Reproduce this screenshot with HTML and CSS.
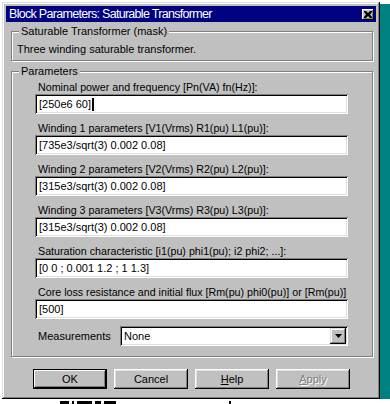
FILE: index.html
```html
<!DOCTYPE html>
<html lang="en">
<head>
    <meta charset="UTF-8">
    <meta name="viewport" content="width=device-width, initial-scale=1.0">
    <title>Block Parameters: Saturable Transformer</title>
    <link rel="stylesheet" href="styles.css">
</head>
<body>
    <div class="screen">
        <div class="window">
            <div class="titlebar">
                <span class="title">Block Parameters: Saturable Transformer</span>
                <span class="close-btn">
                    <svg width="8" height="7" viewBox="0 0 8 7"><path d="M0 0h2l2 2 2-2h2v1L6 3.5 8 6v1H6L4 5 2 7H0V6l2-2.5L0 1z" fill="#000"/></svg>
                </span>
            </div>

            <div class="content">
                <fieldset class="group">
                    <legend>Saturable Transformer (mask)</legend>
                    <p class="description">Three winding saturable transformer.</p>
                </fieldset>

                <fieldset class="group params">
                    <legend>Parameters</legend>
                    <div class="param-list">
                        <div class="param">
                            <div class="param-label">Nominal power and frequency [Pn(VA) fn(Hz)]:</div>
                            <div class="field">[250e6 60]<span class="caret"></span></div>
                        </div>
                        <div class="param">
                            <div class="param-label">Winding 1 parameters [V1(Vrms) R1(pu) L1(pu)]:</div>
                            <div class="field">[735e3/sqrt(3) 0.002 0.08]</div>
                        </div>
                        <div class="param">
                            <div class="param-label">Winding 2 parameters [V2(Vrms) R2(pu) L2(pu)]:</div>
                            <div class="field">[315e3/sqrt(3) 0.002 0.08]</div>
                        </div>
                        <div class="param">
                            <div class="param-label">Winding 3 parameters [V3(Vrms) R3(pu) L3(pu)]:</div>
                            <div class="field">[315e3/sqrt(3) 0.002 0.08]</div>
                        </div>
                        <div class="param">
                            <div class="param-label">Saturation characteristic [i1(pu) phi1(pu); i2 phi2; ...]:</div>
                            <div class="field">[0 0 ; 0.001 1.2 ; 1 1.3]</div>
                        </div>
                        <div class="param">
                            <div class="param-label">Core loss resistance and initial flux [Rm(pu) phi0(pu)] or [Rm(pu)]</div>
                            <div class="field">[500]</div>
                        </div>
                        <div class="select-row">
                            <span class="select-label">Measurements</span>
                            <div class="select">
                                <span class="select-value">None</span>
                                <span class="select-btn">
                                    <svg width="7" height="4" viewBox="0 0 7 4"><path d="M0 0h7L3.5 4z" fill="#000"/></svg>
                                </span>
                            </div>
                        </div>
                    </div>
                </fieldset>

                <div class="buttons">
                    <button class="btn default">OK</button>
                    <button class="btn">Cancel</button>
                    <button class="btn"><u>H</u>elp</button>
                    <button class="btn disabled"><u>A</u>pply</button>
                </div>
            </div>
        </div>
        <div class="desk"></div>
    </div>
    <!-- tops of the window behind the dialog -->
    <div class="behind">
        <span class="mark w4"></span>
        <span class="mark w2"></span>
        <span class="mark w6"></span>
        <span class="mark w3"></span>
        <span class="mark w5"></span>
        <span class="mark w2 far"></span>
    </div>
</body>
</html>
```

FILE: styles.css
```css
body {
    margin: 0;
    width: 390px;
    height: 404px;
    overflow: hidden;
    background: #fff;
    font-family: "Liberation Sans", Arial, sans-serif;
    font-size: 11px;
    color: #000;
}
.screen {
    display: flex;
    height: 399px;
}
.window {
    box-sizing: border-box;
    width: 378px;
    height: 397px;
    margin: 2px 0 0 2px;
    padding: 4px;
    background: #c0c0c0;
    box-shadow: inset -1px -1px #000, inset 1px 1px #dfdfdf, inset -2px -2px #808080, inset 2px 2px #fff;
}
.desk {
    flex: 1;
    margin-top: 4px;
    background: #008080;
}

/* title bar */
.titlebar {
    display: flex;
    align-items: center;
    height: 16px;
    padding: 0 2px 0 3px;
    background: #000080;
    color: #fff;
}
.title {
    flex: 1;
    font-size: 12.5px;
    letter-spacing: -0.7px;
    white-space: nowrap;
}
.close-btn {
    display: flex;
    align-items: center;
    justify-content: center;
    width: 12px;
    height: 11px;
    background: #c0c0c0;
    box-shadow: inset -1px -1px #000, inset 1px 1px #fff, inset -2px -2px #808080;
}

/* group boxes */
.content {
    padding: 3px 0 0 5px;
}
.group {
    box-sizing: border-box;
    width: 362px;
    margin: 0;
    padding: 0;
    border: 1px solid #808080;
    box-shadow: inset 1px 1px #fff, 1px 1px #fff;
}
.group legend {
    margin-left: 7px;
    padding: 0 2px;
    line-height: 13px;
    background: #c0c0c0;
}
.description {
    margin: 0;
    padding: 5px 5px 4px;
    line-height: 13px;
}
.params {
    margin-top: 4px;
}
.param-list {
    display: flex;
    flex-direction: column;
    gap: 8px;
    padding: 3px 24px 10px 23px;
}
.param-label {
    padding-left: 3px;
    line-height: 13px;
    font-size: 10.7px;
    white-space: nowrap;
}
.field {
    box-sizing: border-box;
    height: 20px;
    padding: 0 4px;
    line-height: 20px;
    background: #fff;
    white-space: nowrap;
    box-shadow: inset 1px 1px #808080, inset -1px -1px #fff, inset 2px 2px #000, inset -2px -2px #dfdfdf;
}
.caret {
    display: inline-block;
    width: 2px;
    height: 13px;
    margin-left: 1px;
    vertical-align: -3px;
    background: #000;
}

/* measurements dropdown */
.select-row {
    display: flex;
    align-items: center;
    margin-top: -1px;
}
.select-label {
    width: 82px;
    padding-left: 3px;
}
.select {
    flex: 1;
    display: flex;
    align-items: center;
    box-sizing: border-box;
    height: 20px;
    padding: 2px;
    background: #fff;
    box-shadow: inset 1px 1px #808080, inset -1px -1px #fff, inset 2px 2px #000, inset -2px -2px #dfdfdf;
}
.select-value {
    flex: 1;
    padding-left: 2px;
}
.select-btn {
    display: flex;
    align-items: center;
    justify-content: center;
    width: 16px;
    height: 16px;
    background: #c0c0c0;
    box-shadow: inset -1px -1px #000, inset 1px 1px #dfdfdf, inset -2px -2px #808080, inset 2px 2px #fff;
}

/* buttons */
.buttons {
    display: grid;
    grid-template-columns: repeat(4, 74px);
    gap: 7px;
    margin: 12px 0 0 22px;
}
.btn {
    height: 20px;
    padding: 0;
    border: 0;
    background: #c0c0c0;
    font-family: inherit;
    font-size: 11px;
    color: #000;
    box-shadow: inset -1px -1px #000, inset 1px 1px #fff, inset -2px -2px #808080, inset 2px 2px #dfdfdf;
}
.btn.default {
    box-shadow: inset 0 0 0 1px #000, inset -2px -2px #000, inset 2px 2px #fff, inset -3px -3px #808080;
}
.btn.disabled {
    color: #808080;
    text-shadow: 1px 1px #fff;
}

/* window behind the dialog */
.behind {
    display: flex;
    gap: 3px;
    padding: 2px 0 0 60px;
}
.mark {
    height: 3px;
    background: #000;
}
.w2 { width: 2px; }
.w3 { width: 6px; }
.w4 { width: 9px; }
.w5 { width: 12px; }
.w6 { width: 15px; }
.far { margin-left: 110px; }
```
